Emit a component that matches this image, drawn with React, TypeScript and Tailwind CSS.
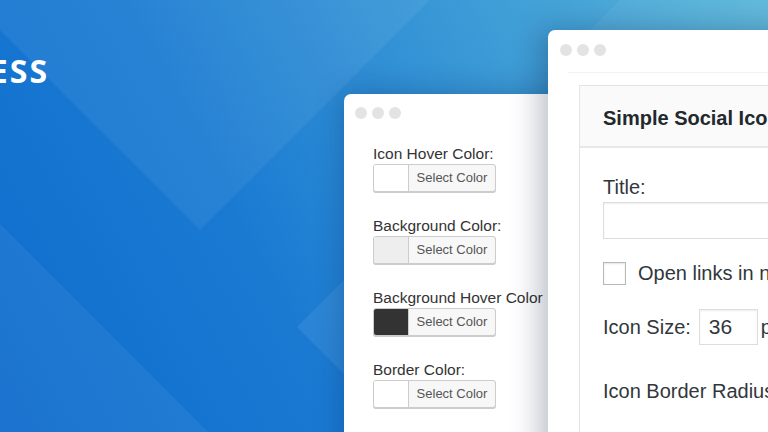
import React from 'react';

const Dots: React.FC = () => (
  <div className="flex gap-[5px]">
    <span className="w-[12px] h-[12px] rounded-full bg-[#e3e3e3]" />
    <span className="w-[12px] h-[12px] rounded-full bg-[#e3e3e3]" />
    <span className="w-[12px] h-[12px] rounded-full bg-[#e3e3e3]" />
  </div>
);

const colorRows = [
  { label: 'Icon Hover Color:', swatch: 'bg-white' },
  { label: 'Background Color:', swatch: 'bg-[#eeeeee]' },
  { label: 'Background Hover Color', swatch: 'bg-[#333333]' },
  { label: 'Border Color:', swatch: 'bg-white' },
];

const ColorPicker: React.FC<{ swatch: string }> = ({ swatch }) => (
  <div className="flex w-[123px] h-[28px] rounded-[3px] border border-[#cccccc] bg-[#f7f7f7] shadow-[0_1px_0_#cccccc] overflow-hidden">
    <div className={`w-[35px] h-full border-r border-[#cccccc] ${swatch}`} />
    <div className="flex-1 flex items-center justify-center text-[13px] text-[#555555]">Select Color</div>
  </div>
);

const Background: React.FC = () => (
  <svg className="absolute inset-0" width="768" height="432" viewBox="0 0 768 432">
    <defs>
      <linearGradient id="bg" x1="0" y1="432" x2="768" y2="0" gradientUnits="userSpaceOnUse">
        <stop offset="0" stopColor="#0f6ccd" />
        <stop offset="0.35" stopColor="#1a7ad2" />
        <stop offset="1" stopColor="#5ab7da" />
      </linearGradient>
    </defs>
    <rect width="768" height="432" fill="url(#bg)" />
    <polygon points="-30,0 430,0 200,230" fill="#ffffff" fillOpacity="0.06" />
    <polygon points="0,224 208,432 0,432" fill="#ffffff" fillOpacity="0.05" />
    <polygon points="297,327 352,272 352,382" fill="#ffffff" fillOpacity="0.07" />
    <polygon points="620,0 768,0 768,40 580,40" fill="#ffffff" fillOpacity="0.05" />
  </svg>
);

export default function App() {
  return (
    <div className="relative w-[768px] h-[432px] overflow-hidden font-['Liberation_Sans',Arial,sans-serif]">
      <Background />

      {/* logo, cut off by the left edge */}
      <div className="absolute top-[55px] right-[719px] whitespace-nowrap text-white text-[32px] leading-none font-bold tracking-[2px] font-['Open_Sans',sans-serif]">
        STUDIOPRESS
      </div>

      {/* small settings window */}
      <div className="absolute left-[344px] top-[94px] w-[230px] h-[360px] rounded-[7px] bg-white shadow-[0_0_30px_rgba(0,30,80,0.3)] pl-[11px] pt-[13px]">
        <Dots />
        <div className="mt-[26px] ml-[18px] flex flex-col gap-[25px]">
          {colorRows.map((row) => (
            <div key={row.label} className="flex flex-col gap-[1px]">
              <span className="text-[15.5px] leading-[18px] text-[#333333] whitespace-nowrap">{row.label}</span>
              <ColorPicker swatch={row.swatch} />
            </div>
          ))}
        </div>
      </div>

      {/* widget window */}
      <div className="absolute left-[548px] top-[30px] w-[260px] h-[440px] rounded-[7px] bg-white shadow-[-8px_0_30px_rgba(0,20,60,0.28)] pt-[14px]">
        <div className="pl-[12px]">
          <Dots />
        </div>
        <div className="mt-[16px] ml-[20px] border-t border-[#f2f2f2] pt-[12px] pl-[11px]">
          <div className="border border-[#e2e4e7] border-r-0 border-b-0 h-[400px]">
            <div className="bg-[#fafafa] border-b-2 border-[#e8e8e8] pl-[23px] pt-[20px] pb-[16px]">
              <h3 className="text-[20px] leading-[24px] font-bold text-[#23282d] whitespace-nowrap">Simple Social Icons</h3>
            </div>
            <div className="pl-[23px] pt-[27px] text-[20px] leading-[24px] text-[#32373c] whitespace-nowrap">
              <div>Title:</div>
              <div className="mt-[3px] h-[37px] w-[200px] border border-[#dddddd] shadow-[inset_0_1px_2px_rgba(0,0,0,0.07)]" />
              <div className="mt-[22px] flex items-center gap-[12px]">
                <span className="shrink-0 w-[23px] h-[23px] border border-[#b4b9be] shadow-[inset_0_1px_2px_rgba(0,0,0,0.1)]" />
                <span>Open links in new window</span>
              </div>
              <div className="mt-[24px] flex items-center">
                <span>Icon Size:</span>
                <div className="shrink-0 ml-[8px] w-[59px] h-[36px] border border-[#dddddd] shadow-[inset_0_1px_2px_rgba(0,0,0,0.07)] flex items-center pl-[9px] text-[21px]">36</div>
                <span className="ml-[3px]">px</span>
              </div>
              <div className="mt-[34px]">Icon Border Radius:</div>
            </div>
          </div>
        </div>
      </div>
    </div>
  );
}
